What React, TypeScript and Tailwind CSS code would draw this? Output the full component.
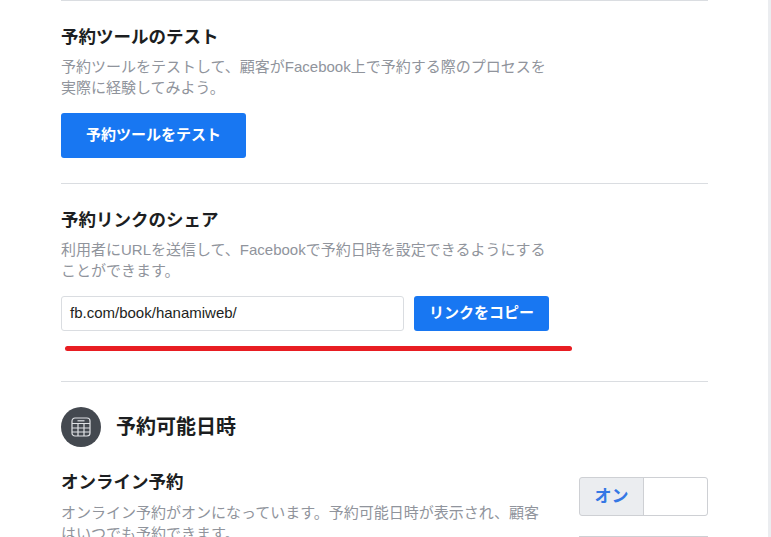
const font = {
  fontFamily: '"Liberation Sans", "Noto Sans CJK JP", sans-serif',
};

function TableIcon() {
  return (
    <svg width="20" height="20" viewBox="0 0 20 20" fill="none" stroke="#dfe1e5" strokeWidth="1.2">
      <rect x="1" y="1" width="18" height="18" rx="3" />
      <path d="M1 6.5h18M1 11h18M1 15h18M7 6.5V19M13 6.5V19" />
      <path d="M6.5 3.8h7" />
    </svg>
  );
}

export default function App() {
  return (
    <div className="relative h-[537px] w-[771px] overflow-hidden bg-white" style={font}>
      <div className="flex h-full">
        <div className="ml-[61px] w-[647px]">
          <div className="h-px bg-[#dadde1]" />

          {/* Test */}
          <div className="h-[183px] border-b border-[#dadde1] pt-[25px]">
            <h2 className="text-[17.5px] leading-[22px] font-bold text-[#1c1e21]">予約ツールのテスト</h2>
            <p className="mt-[8px] w-[490px] text-[15px] leading-[21px] text-[#90949c]">
              予約ツールをテストして、顧客がFacebook上で予約する際のプロセスを実際に経験してみよう。
            </p>
            <button className="mt-[15px] h-[45px] w-[185px] rounded-[3px] bg-[#1877f2] text-[15px] font-bold text-white">
              予約ツールをテスト
            </button>
          </div>

          {/* Share */}
          <div className="h-[198px] border-b border-[#dadde1] pt-[25px]">
            <h2 className="text-[17.5px] leading-[22px] font-bold text-[#1c1e21]">予約リンクのシェア</h2>
            <p className="mt-[8px] w-[490px] text-[15px] leading-[21px] text-[#90949c]">
              利用者にURLを送信して、Facebookで予約日時を設定できるようにすることができます。
            </p>
            <div className="mt-[15px] flex gap-[10px]">
              <div className="flex h-[35px] w-[343px] items-center rounded-[3px] border border-[#dadde1] pl-[8px] text-[15px] text-[#1c1e21]">
                fb.com/book/hanamiweb/
              </div>
              <button className="h-[35px] w-[135px] rounded-[3px] bg-[#1877f2] text-[15px] font-bold text-white">
                リンクをコピー
              </button>
            </div>
            <div className="mt-[15px] ml-[4px] h-[5px] w-[507px] rounded-full bg-[#e81d22]" />
          </div>

          {/* Availability */}
          <div className="mt-[25px] flex items-center gap-[15px]">
            <div className="flex h-[40px] w-[40px] items-center justify-center rounded-full bg-[#444950]">
              <TableIcon />
            </div>
            <h2 className="text-[20px] font-bold text-[#1c1e21]">予約可能日時</h2>
          </div>

          <div className="mt-[24px] flex justify-between">
            <div>
              <h3 className="text-[17.5px] leading-[22px] font-bold text-[#1c1e21]">オンライン予約</h3>
              <p className="mt-[9px] w-[490px] text-[15px] leading-[21px] text-[#90949c]">
                オンライン予約がオンになっています。予約可能日時が表示され、顧客はいつでも予約できます。
              </p>
            </div>
            <div className="pt-[6px]">
              <div className="flex h-[39px] w-[129px] rounded-[3px] border border-[#ced0d4] bg-[#ebedf0]">
                <div className="flex w-[63px] items-center justify-center text-[17px] font-bold text-[#3578e5]">オン</div>
                <div className="flex-1 rounded-r-[3px] border-l border-[#ced0d4] bg-white" />
              </div>
              <div className="mt-[20px] h-px bg-[#ced0d4]" />
            </div>
          </div>
        </div>

        <div className="ml-auto h-full w-[3px] bg-[#ebedf0]" />
      </div>
    </div>
  );
}
